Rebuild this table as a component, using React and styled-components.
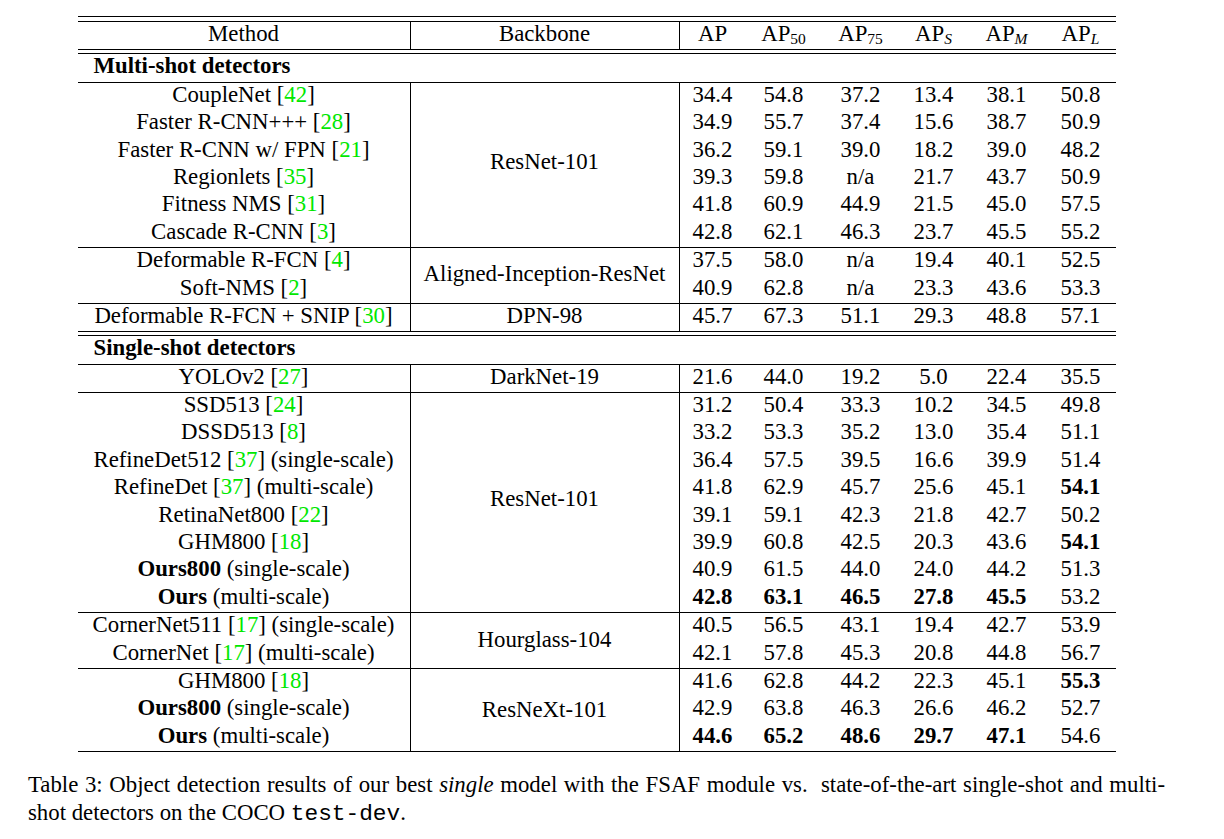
import React from 'react';
import styled, { createGlobalStyle } from 'styled-components';

const SERIF = '"Liberation Serif", "Times New Roman", serif';

const GlobalStyle = createGlobalStyle`
  html, body { margin: 0; padding: 0; background: #fff; }
  body {
    font-family: ${SERIF};
    color: #000;
    font-size: 22.8px;
  }
`;

const Page = styled.main`
  width: 1137px;
  padding: 16px 0 0 28px;
  font-family: ${SERIF};
`;

const Table = styled.section`
  width: 1038px;
  margin: 0 auto;
  display: flex;
  flex-direction: column;
`;

const Rule = styled.div`
  height: 1px;
  background: #000;
`;

const DoubleRule = styled.div`
  height: ${(p) => p.$gap}px;
  border-top: 1px solid #000;
  border-bottom: 1px solid #000;
`;

const Block = styled.div`
  display: grid;
  grid-template-columns: 332px 270px 66px 76px 78px 68px 78px 70px;
  grid-template-rows: repeat(${(p) => p.$rows}, 27.4px);
`;

const Method = styled.div`
  grid-column: 1;
  grid-row: ${(p) => p.$row};
  text-align: center;
  line-height: 23px;
  white-space: nowrap;
`;

const Backbone = styled.div`
  grid-column: 2;
  grid-row: 1 / span ${(p) => p.$rows};
  border-left: 1px solid #000;
  border-right: 1px solid #000;
  display: flex;
  align-items: center;
  justify-content: center;
  line-height: 23px;
  padding-bottom: ${(p) => p.$raise || 0}px;
  white-space: nowrap;
`;

const Num = styled.div`
  grid-row: ${(p) => p.$row};
  grid-column: ${(p) => p.$col};
  text-align: center;
  line-height: 23px;
  font-weight: ${(p) => (p.$bold ? 700 : 400)};
  white-space: nowrap;
`;

const SectionTitle = styled.div`
  height: 27.4px;
  line-height: 23px;
  padding-left: 16px;
  font-weight: 700;
`;

const Cite = styled.span`
  color: #00e800;
`;

const Strong = styled.b`
  font-weight: 700;
`;

const Sub = styled.sub`
  font-size: 15.5px;
  line-height: 0;
  vertical-align: -3px;
  font-style: ${(p) => (p.$it ? 'italic' : 'normal')};
`;

const Caption = styled.p`
  margin: 19px 0 0;
  line-height: 28px;
  text-align: justify;
`;

const CaptionLine = styled.span`
  display: block;
  text-align-last: justify;
`;

const Mono = styled.code`
  font-family: "Liberation Mono", "Courier New", monospace;
  font-size: 22.8px;
`;

const HEAD = [
  { t: 'AP' },
  { t: 'AP', s: '50' },
  { t: 'AP', s: '75' },
  { t: 'AP', s: 'S', it: true },
  { t: 'AP', s: 'M', it: true },
  { t: 'AP', s: 'L', it: true },
];

const sections = [
  {
    title: 'Multi-shot detectors',
    groups: [
      {
        backbone: 'ResNet-101',
        raise: 7,
        rows: [
          { name: 'CoupleNet', cite: 42, v: ['34.4', '54.8', '37.2', '13.4', '38.1', '50.8'] },
          { name: 'Faster R-CNN+++', cite: 28, v: ['34.9', '55.7', '37.4', '15.6', '38.7', '50.9'] },
          { name: 'Faster R-CNN w/ FPN', cite: 21, v: ['36.2', '59.1', '39.0', '18.2', '39.0', '48.2'] },
          { name: 'Regionlets', cite: 35, v: ['39.3', '59.8', 'n/a', '21.7', '43.7', '50.9'] },
          { name: 'Fitness NMS', cite: 31, v: ['41.8', '60.9', '44.9', '21.5', '45.0', '57.5'] },
          { name: 'Cascade R-CNN', cite: 3, v: ['42.8', '62.1', '46.3', '23.7', '45.5', '55.2'] },
        ],
      },
      {
        backbone: 'Aligned-Inception-ResNet',
        raise: 5,
        rows: [
          { name: 'Deformable R-FCN', cite: 4, v: ['37.5', '58.0', 'n/a', '19.4', '40.1', '52.5'] },
          { name: 'Soft-NMS', cite: 2, v: ['40.9', '62.8', 'n/a', '23.3', '43.6', '53.3'] },
        ],
      },
      {
        backbone: 'DPN-98',
        raise: 4,
        rows: [
          { name: 'Deformable R-FCN + SNIP', cite: 30, v: ['45.7', '67.3', '51.1', '29.3', '48.8', '57.1'] },
        ],
      },
    ],
  },
  {
    title: 'Single-shot detectors',
    groups: [
      {
        backbone: 'DarkNet-19',
        raise: 4,
        rows: [
          { name: 'YOLOv2', cite: 27, v: ['21.6', '44.0', '19.2', '5.0', '22.4', '35.5'] },
        ],
      },
      {
        backbone: 'ResNet-101',
        raise: 8,
        rows: [
          { name: 'SSD513', cite: 24, v: ['31.2', '50.4', '33.3', '10.2', '34.5', '49.8'] },
          { name: 'DSSD513', cite: 8, v: ['33.2', '53.3', '35.2', '13.0', '35.4', '51.1'] },
          { name: 'RefineDet512', cite: 37, suffix: '(single-scale)', v: ['36.4', '57.5', '39.5', '16.6', '39.9', '51.4'] },
          { name: 'RefineDet', cite: 37, suffix: '(multi-scale)', v: ['41.8', '62.9', '45.7', '25.6', '45.1', '54.1'], bold: [5] },
          { name: 'RetinaNet800', cite: 22, v: ['39.1', '59.1', '42.3', '21.8', '42.7', '50.2'] },
          { name: 'GHM800', cite: 18, v: ['39.9', '60.8', '42.5', '20.3', '43.6', '54.1'], bold: [5] },
          { name: 'Ours800', strong: true, suffix: '(single-scale)', v: ['40.9', '61.5', '44.0', '24.0', '44.2', '51.3'] },
          { name: 'Ours', strong: true, suffix: '(multi-scale)', v: ['42.8', '63.1', '46.5', '27.8', '45.5', '53.2'], bold: [0, 1, 2, 3, 4] },
        ],
      },
      {
        backbone: 'Hourglass-104',
        raise: 3,
        rows: [
          { name: 'CornerNet511', cite: 17, suffix: '(single-scale)', v: ['40.5', '56.5', '43.1', '19.4', '42.7', '53.9'] },
          { name: 'CornerNet', cite: 17, suffix: '(multi-scale)', v: ['42.1', '57.8', '45.3', '20.8', '44.8', '56.7'] },
        ],
      },
      {
        backbone: 'ResNeXt-101',
        raise: 2,
        rows: [
          { name: 'GHM800', cite: 18, v: ['41.6', '62.8', '44.2', '22.3', '45.1', '55.3'], bold: [5] },
          { name: 'Ours800', strong: true, suffix: '(single-scale)', v: ['42.9', '63.8', '46.3', '26.6', '46.2', '52.7'] },
          { name: 'Ours', strong: true, suffix: '(multi-scale)', v: ['44.6', '65.2', '48.6', '29.7', '47.1', '54.6'], bold: [0, 1, 2, 3, 4] },
        ],
      },
    ],
  },
];

function MethodLabel({ r }) {
  return (
    <>
      {r.strong ? <Strong>{r.name}</Strong> : r.name}
      {r.cite !== undefined && (
        <>
          {' ['}
          <Cite>{r.cite}</Cite>
          {']'}
        </>
      )}
      {r.suffix && ` ${r.suffix}`}
    </>
  );
}

function Group({ g }) {
  return (
    <Block $rows={g.rows.length}>
      <Backbone $rows={g.rows.length} $raise={g.raise}>
        {g.backbone}
      </Backbone>
      {g.rows.map((r, i) => (
        <React.Fragment key={i}>
          <Method $row={i + 1}>
            <MethodLabel r={r} />
          </Method>
          {r.v.map((val, j) => (
            <Num key={j} $row={i + 1} $col={j + 3} $bold={r.bold && r.bold.includes(j)}>
              {val}
            </Num>
          ))}
        </React.Fragment>
      ))}
    </Block>
  );
}

export default function App() {
  return (
    <>
      <GlobalStyle />
      <Page>
        <Table>
          <DoubleRule $gap={4} />
          <Block $rows={1}>
            <Method $row={1}>Method</Method>
            <Backbone $rows={1} $raise={4.4}>
              Backbone
            </Backbone>
            {HEAD.map((h, j) => (
              <Num key={j} $row={1} $col={j + 3}>
                {h.t}
                {h.s && <Sub $it={h.it}>{h.s}</Sub>}
              </Num>
            ))}
          </Block>
          {sections.map((s, si) => (
            <React.Fragment key={si}>
              <DoubleRule $gap={3} />
              <SectionTitle>{s.title}</SectionTitle>
              {s.groups.map((g, gi) => (
                <React.Fragment key={gi}>
                  <Rule />
                  <Group g={g} />
                </React.Fragment>
              ))}
            </React.Fragment>
          ))}
          <Rule />
        </Table>
        <Caption>
          <CaptionLine>
            Table 3: Object detection results of our best <i>single</i> model with the FSAF module vs.&nbsp; state-of-the-art single-shot and multi-
          </CaptionLine>
          shot detectors on the COCO <Mono>test-dev</Mono>.
        </Caption>
      </Page>
    </>
  );
}
